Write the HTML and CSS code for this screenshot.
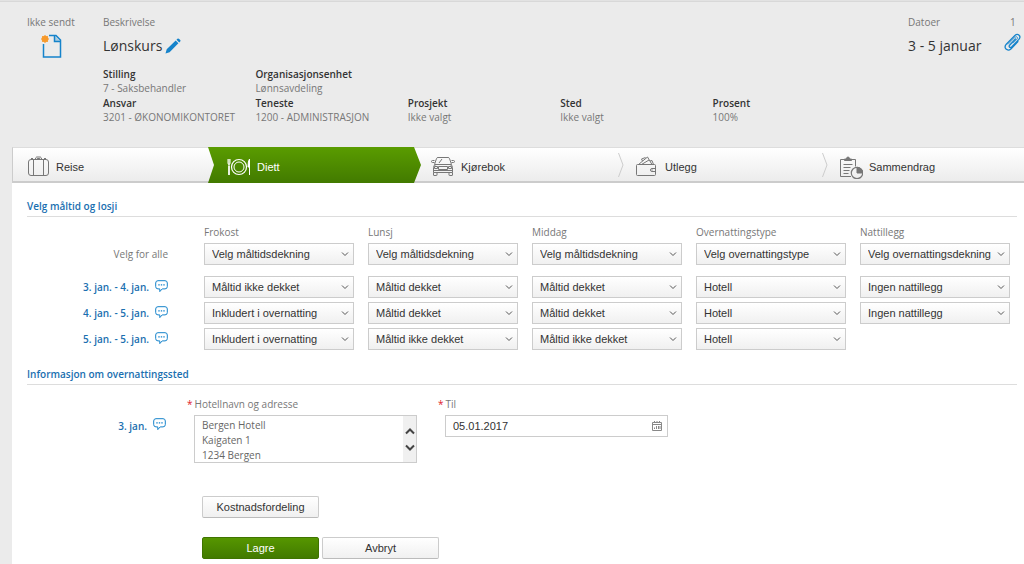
FILE: index.html
```
<!DOCTYPE html>
<html lang="no">
<head>
<meta charset="utf-8">
<title>Reiseregning - Diett</title>
<link rel="stylesheet" href="styles.css">
</head>
<body>
<svg class="symbols" aria-hidden="true">
  <symbol id="bubble" viewBox="0 0 13 13"><path d="M3 .7h7a2.3 2.3 0 0 1 2.3 2.3v3.6A2.3 2.3 0 0 1 10 8.900H7.200L4.800 11.600V8.900H3A2.300 2.300 0 0 1 .7 6.600V3A2.300 2.300 0 0 1 3 .7z" fill="none" stroke="currentColor"/><path d="M3.300 4.200h1.400v1.400H3.300zM5.800 4.200h1.400v1.400H5.800zM8.300 4.200h1.400v1.400H8.300z" fill="currentColor"/></symbol>
  <symbol id="divider" viewBox="0 0 6 24"><path d="M.5 0 5 12 .5 24" fill="none" stroke="#ccc"/></symbol>
</svg>

<header class="trip">
  <div class="status">
    <span class="caption">Ikke sendt</span>
    <svg class="doc-icon" viewBox="0 0 22 26"><path d="M9 2.500h7l4.500 4.500v17H3.500V11M14.500 2.500V8.500h6" fill="none" stroke="#1583cb" stroke-width="1.500"/><path d="M14.500 2.500 20.500 8.500h-6z" fill="#1583cb" opacity=".3"/><circle cx="5" cy="6" r="3.300" fill="#f79a2c"/><path d="M5 2v8M1 6h8M2.200 3.200l5.600 5.600M7.800 3.200 2.200 8.800" stroke="#f79a2c" stroke-width="1"/></svg>
  </div>
  <div class="description">
    <span class="caption">Beskrivelse</span>
    <h1 class="title">Lønskurs
      <button class="icon-button" type="button" aria-label="Rediger"><svg width="16" height="16" viewBox="0 0 16 16"><path d="M.5 15.500 1.700 11.300 10.700 2.500l2.700 2.700L4.600 14.200zM11.500 1.700 12.400.8Q13.300.1 14.200.9l1 1q.8.900 0 1.700l-1 .9z" fill="#1583cb"/></svg></button>
    </h1>
    <dl class="meta">
      <div><dt>Stilling</dt><dd>7 - Saksbehandler</dd></div>
      <div><dt>Organisasjonsenhet</dt><dd>Lønnsavdeling</dd></div>
      <div class="first"><dt>Ansvar</dt><dd>3201 - ØKONOMIKONTORET</dd></div>
      <div><dt>Teneste</dt><dd>1200 - ADMINISTRASJON</dd></div>
      <div><dt>Prosjekt</dt><dd>Ikke valgt</dd></div>
      <div><dt>Sted</dt><dd>Ikke valgt</dd></div>
      <div><dt>Prosent</dt><dd>100%</dd></div>
    </dl>
  </div>
  <div class="dates">
    <span class="caption">Datoer</span>
    <p class="title">3 - 5 januar</p>
  </div>
  <div class="attachments">
    <span class="caption">1</span>
    <button class="icon-button" type="button" aria-label="Vedlegg"><svg width="17" height="19" viewBox="0 0 17 19"><path d="M11.500 6 5.600 12.200q-.9 1.200 0 2 .9.700 2-.2l7.300-7.600q2-2.400.2-4.200-2-1.700-4.200.3L2.300 11.200q-2.300 2.700-.3 4.900 2.300 2 4.900-.2L14 8.600" fill="none" stroke="#1583cb" stroke-width="1.300" stroke-linecap="round"/><path d="M4 11.400l7.200-7.300q1.200-.9 2 0 .8.900-.2 2L9 10.200" fill="none" stroke="#1583cb" stroke-width=".8"/></svg></button>
  </div>
</header>

<main class="panel">
  <nav class="steps">
    <a class="step" href="#reise"><svg class="step-icon" viewBox="0 0 24 24"><g fill="none" stroke="#777"><rect x="1.500" y="4.500" width="20" height="16" rx="2.500"/><path d="M6.500 4.500v16M16.500 4.500v16M8 4.500l1-2q.3-.5 1-.5h3q.7 0 1 .5l1 2M9.500 4.500l.7-1h2.600l.7 1M4 3.500h2M17 3.500h2"/></g></svg>Reise</a>
    <a class="step active" href="#diett" aria-current="step"><svg class="step-icon" viewBox="0 0 24 24"><g fill="none" stroke="#fff"><circle cx="12" cy="12" r="7.500" stroke-width="1.200"/><circle cx="12" cy="12" r="5"/><path d="M1 4v4q0 1.500 1 1.500T3 8V4M2 4v16" /><path d="M2 11v9" stroke-width="1.500"/><path d="M22.500 20V4q-1.500 2-1.500 8h1.500" fill="#fff"/></g></svg>Diett</a>
    <a class="step" href="#kjorebok"><svg class="step-icon" viewBox="0 0 24 24"><g fill="none" stroke="#777"><path d="M3.500 9.500 5.500 3.500q.3-1 1.500-1h10q1.200 0 1.500 1l2 6zM2.500 17.500v-5q0-3 3-3h13q3 0 3 3v5zM2.500 17.500v2.500q0 .5.500.5h2.500q.5 0 .5-.5v-2.500M18 17.500v2.500q0 .5.500.5H21q.5 0 .5-.5v-2.500M7.500 11.500h9v3h-9zM3.500 11.500h3v2h-3zM17.500 11.500h3v2h-3zM3 15.500h18M3.500 7.500h-2q-1 0-1-1t1-1h2M20.500 7.500h2q1 0 1-1t-1-1h-2M8 8l3-4"/></g></svg>Kjørebok</a>
    <a class="step" href="#utlegg"><svg class="divider"><use href="#divider"/></svg><svg class="step-icon" viewBox="0 0 24 24"><g fill="none" stroke="#777"><path d="M2.500 9.500h17q1 0 1 1v9q0 1-1 1h-17q-1 0-1-1v-9q0-1 1-1zM20.500 13.500H17q-1.500 0-1.500 1.500t1.500 1.500h3.500M3.500 9.500 12.500 2l4.500 7.500M6.500 9.500 14 5M7.500 6 6.500 4l4-1.500M15 6l2-.5 1.500 4M17.200 14.500v1"/></g></svg>Utlegg</a>
    <a class="step" href="#sammendrag"><svg class="divider"><use href="#divider"/></svg><svg class="step-icon" viewBox="0 0 24 24"><g fill="none" stroke="#777"><path d="M5 4.500H1.500v17H12M13 4.500h3.500v7M4.500 9.500h9M4.500 12.500h7M4.500 15.500h6M4.500 18.500h5"/><path d="M5.500 5.500V4H7.500Q7.500 2 9 2t1.500 2h2v1.500z" fill="#777"/><circle cx="18" cy="18" r="5.700" stroke-width="1.200"/><path d="M18 18v-5.700a5.700 5.700 0 0 1 5.700 5.700z" fill="#777"/></g></svg>Sammendrag</a>
  </nav>

  <form class="form">
    <h2 class="section-title">Velg måltid og losji</h2>
    <div class="meals">
      <div class="row heads">
        <span></span><span>Frokost</span><span>Lunsj</span><span>Middag</span><span>Overnattingstype</span><span>Nattillegg</span>
      </div>
      <div class="row all">
        <span class="row-label muted">Velg for alle</span>
        <select aria-label="Frokost, alle"><option>Velg måltidsdekning</option></select>
        <select aria-label="Lunsj, alle"><option>Velg måltidsdekning</option></select>
        <select aria-label="Middag, alle"><option>Velg måltidsdekning</option></select>
        <select aria-label="Overnattingstype, alle"><option>Velg overnattingstype</option></select>
        <select aria-label="Nattillegg, alle"><option>Velg overnattingsdekning</option></select>
      </div>
      <div class="row">
        <span class="row-label">3. jan. - 4. jan.<svg class="bubble"><use href="#bubble"/></svg></span>
        <select aria-label="Frokost 3. jan."><option>Måltid ikke dekket</option></select>
        <select aria-label="Lunsj 3. jan."><option>Måltid dekket</option></select>
        <select aria-label="Middag 3. jan."><option>Måltid dekket</option></select>
        <select aria-label="Overnattingstype 3. jan."><option>Hotell</option></select>
        <select aria-label="Nattillegg 3. jan."><option>Ingen nattillegg</option></select>
      </div>
      <div class="row">
        <span class="row-label">4. jan. - 5. jan.<svg class="bubble"><use href="#bubble"/></svg></span>
        <select aria-label="Frokost 4. jan."><option>Inkludert i overnatting</option></select>
        <select aria-label="Lunsj 4. jan."><option>Måltid dekket</option></select>
        <select aria-label="Middag 4. jan."><option>Måltid dekket</option></select>
        <select aria-label="Overnattingstype 4. jan."><option>Hotell</option></select>
        <select aria-label="Nattillegg 4. jan."><option>Ingen nattillegg</option></select>
      </div>
      <div class="row">
        <span class="row-label">5. jan. - 5. jan.<svg class="bubble"><use href="#bubble"/></svg></span>
        <select aria-label="Frokost 5. jan."><option>Inkludert i overnatting</option></select>
        <select aria-label="Lunsj 5. jan."><option>Måltid ikke dekket</option></select>
        <select aria-label="Middag 5. jan."><option>Måltid ikke dekket</option></select>
        <select aria-label="Overnattingstype 5. jan."><option>Hotell</option></select>
      </div>
    </div>

    <h2 class="section-title">Informasjon om overnattingssted</h2>
    <div class="lodging">
      <span class="row-label">3. jan.<svg class="bubble"><use href="#bubble"/></svg></span>
      <div class="field address">
        <label for="hotel"><span class="required">*</span>Hotellnavn og adresse</label>
        <div class="box">
          <textarea id="hotel" rows="3">Bergen Hotell
Kaigaten 1
1234 Bergen</textarea>
          <div class="scroller">
            <button type="button" aria-label="Rull opp"><svg width="10" height="8" viewBox="0 0 10 8"><path d="M1 6.500 5 2.500l4 4" fill="none" stroke="#444" stroke-width="2"/></svg></button>
            <button type="button" aria-label="Rull ned"><svg width="10" height="8" viewBox="0 0 10 8"><path d="M1 1.500l4 4 4-4" fill="none" stroke="#444" stroke-width="2"/></svg></button>
          </div>
        </div>
      </div>
      <div class="field until">
        <label for="until"><span class="required">*</span>Til</label>
        <div class="box">
          <input id="until" type="text" value="05.01.2017">
          <button class="icon-button calendar" type="button" aria-label="Velg dato"><svg width="10" height="10" viewBox="0 0 10 10"><path d="M.5 1.500h9v8h-9zM.5 3.500h9" fill="none" stroke="#888"/><path d="M2.500 0v2M5 0v2M7.500 0v2M4.500 5v3M6.500 5v3M2.500 6.500v1.500M8 5v3" stroke="#888"/></svg></button>
        </div>
      </div>
    </div>

    <div class="actions">
      <button class="button" type="button">Kostnadsfordeling</button>
    </div>
    <div class="actions last">
      <button class="button primary" type="submit">Lagre</button>
      <button class="button" type="button">Avbryt</button>
    </div>
  </form>
</main>
</body>
</html>
```
FILE: styles.css
```
* { box-sizing: border-box; }

body {
  display: flex;
  flex-direction: column;
  min-height: 100vh;
  margin: 0;
  background: #ebebeb;
  color: #333;
  font: 10px/14px "Open Sans", sans-serif;
}

button, select, input, textarea { font: 11px/14px "Liberation Sans", Arial, sans-serif; color: #333; }

.symbols { display: none; }
svg { flex: none; }

.icon-button { padding: 0; border: 0; background: none; line-height: 0; cursor: pointer; }

.trip {
  display: flex;
  flex: none;
  height: 147px;
  padding: 14px 2px 0 27px;
  border-top: 1px solid #e2e2e2;
  box-shadow: inset 0 1px #d8d8d8;
}

.caption { display: block; color: #777; white-space: nowrap; }

.status { width: 76px; }
.doc-icon { display: block; width: 22px; height: 26px; margin: 4px 0 0 13px; }

.description { flex: 1; }

.title {
  display: flex;
  align-items: center;
  gap: 3px;
  margin: 7px 0 0;
  color: #333;
  font-size: 14px;
  font-weight: 400;
  line-height: 20px;
  white-space: nowrap;
}

.meta { display: grid; grid-template-columns: repeat(5, 1fr); margin: 11px 0 0; padding-right: 43px; }
.meta .first { grid-column: 1; }
.meta dt { font-weight: 600; line-height: 14px; }
.meta dd { margin: 0; color: #777; line-height: 15px; white-space: nowrap; }

.dates { width: 96px; }
.attachments { width: 18px; }
.attachments .caption { padding-left: 6px; }
.attachments .icon-button { margin-top: 4px; }

.panel { flex: 1 0 auto; margin-left: 12px; background: #fff; }

.steps { display: grid; grid-template-columns: 200fr 204fr 204fr 204fr 200fr; }

.step {
  position: relative;
  display: flex;
  align-items: center;
  gap: 6px;
  height: 36px;
  padding: 4px 0 0 15px;
  border-top: 1px solid #ddd;
  border-bottom: 2px solid #ccc;
  background: linear-gradient(#fff, #ececec);
  color: #333;
  font: 11px/14px "Liberation Sans", Arial, sans-serif;
  text-decoration: none;
}

.step:first-child { gap: 5px; padding-left: 14px; border-left: 1px solid #ccc; }
.step-icon { width: 24px; height: 24px; }
.divider { position: absolute; top: 5px; left: -2px; width: 6px; height: 24px; }

.step.active { z-index: 1; color: #fff; isolation: isolate; }
.step.active::before {
  content: "";
  position: absolute;
  inset: -1px -5px -2px -4px;
  z-index: -1;
  background: linear-gradient(#5a9c00, #427a00);
  clip-path: polygon(0 0, calc(100% - 7px) 0, 100% 50%, calc(100% - 7px) 100%, 0 100%, 6px 50%);
}

.form { padding: 16px 14px 4px 15px; }

.section-title {
  margin: 0 -7px 0 0;
  padding-bottom: 3px;
  border-bottom: 1px solid #ddd;
  color: #1a6fb0;
  font-size: 10px;
  font-weight: 600;
  line-height: 14px;
}

.meals { display: grid; gap: 4px; padding: 8px 0 17px; }
.row { display: grid; grid-template-columns: 163px repeat(5, minmax(0, 1fr)); gap: 14px; align-items: center; }
.heads { color: #777; }
.all { margin-bottom: 7px; }

.row-label {
  display: flex;
  align-items: center;
  justify-content: flex-end;
  gap: 6px;
  padding-right: 22px;
  color: #1a6fb0;
  font-weight: 600;
}
.muted { color: #777; font-weight: 400; }
.bubble { width: 13px; height: 13px; margin-bottom: 2px; color: #1583cb; }

select {
  width: 100%;
  height: 22px;
  padding: 0 14px 0 7px;
  border: 1px solid #ccc;
  border-radius: 0;
  appearance: none;
  background:
    url("data:image/svg+xml,%3Csvg xmlns='http://www.w3.org/2000/svg' width='8' height='5'%3E%3Cpath d='M1 .5l3 3 3-3' fill='none' stroke='%23555'/%3E%3C/svg%3E") no-repeat right 4px center,
    linear-gradient(#fff, #f0f0f0);
}

.lodging { display: flex; align-items: flex-start; padding: 12px 0 33px; }
.lodging .row-label { width: 160px; padding-right: 21px; padding-top: 21px; }
.field label { display: block; margin-bottom: 4px; color: #777; }
.required { margin-right: 2px; color: #e0202b; }
.box { display: flex; margin-left: 7px; border: 1px solid #ccc; background: #fff; }
.address { width: 230px; }
.until { width: 230px; margin-left: 21px; }

textarea {
  flex: 1;
  min-width: 0;
  height: 46px;
  padding: 2px 7px 0;
  border: 0;
  background: none;
  color: #666;
  font: 10px/15px "Open Sans", sans-serif;
  resize: none;
  overflow: hidden;
}

.scroller { display: flex; flex-direction: column; align-items: center; justify-content: center; gap: 9px; width: 13px; background: #f0f0f0; }
.scroller button { padding: 0; border: 0; background: none; line-height: 0; }

input { flex: 1; min-width: 0; height: 20px; padding: 0 7px; border: 0; background: none; }
.calendar { padding: 0 5px; }

.actions { display: flex; gap: 3px; padding: 0 0 19px 175px; }
.actions.last { padding-bottom: 0; }

.button {
  width: 117px;
  height: 22px;
  padding: 0;
  border: 1px solid #ccc;
  border-bottom-color: #bbb;
  border-radius: 2px;
  background: linear-gradient(#fff, #f0f0f0);
}
.primary { border-color: #3f7400; background: linear-gradient(#569600, #427a00); color: #fff; }
```
